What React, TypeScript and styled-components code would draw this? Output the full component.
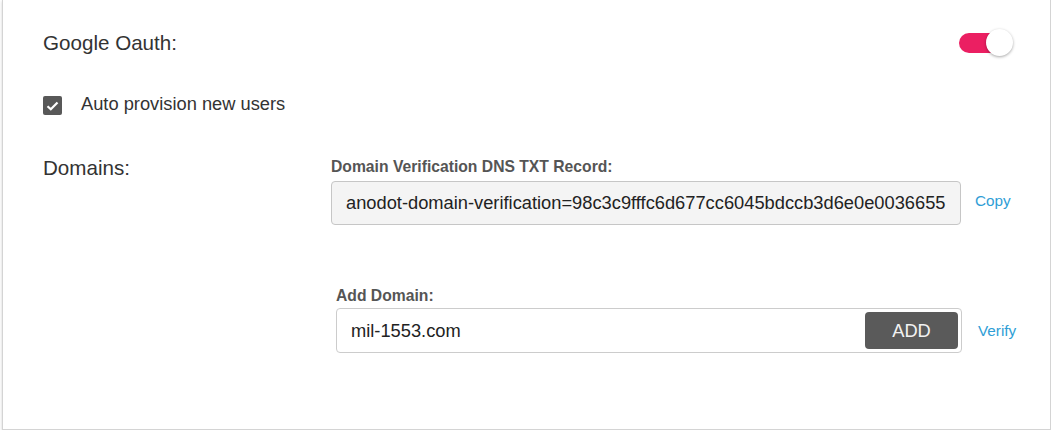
import React, { useState } from 'react';
import styled, { createGlobalStyle } from 'styled-components';

const GlobalStyle = createGlobalStyle`
  html, body {
    margin: 0;
    padding: 0;
    background: #ffffff;
  }
  body {
    font-family: 'Liberation Sans', Arial, sans-serif;
    color: #333333;
  }
`;

const Page = styled.div`
  padding-left: 2px;
`;

const Card = styled.div`
  box-sizing: border-box;
  width: 1049px;
  height: 430px;
  background: #ffffff;
  border: 1px solid #d4d4d4;
  border-top: none;
  box-shadow: 0 1px 3px rgba(0, 0, 0, 0.18);
  padding: 22px 37px 0 40px;
  display: flex;
  flex-direction: column;
`;

const HeaderRow = styled.div`
  display: flex;
  align-items: center;
  justify-content: space-between;
  height: 40px;
`;

const Title = styled.div`
  font-size: 20.6px;
  line-height: 23px;
  color: #333333;
`;

const Switch = styled.button<{ $on: boolean }>`
  position: relative;
  width: 54px;
  height: 28px;
  padding: 0;
  border: none;
  background: transparent;
  cursor: pointer;
  margin-top: -1px;
`;

const Track = styled.span<{ $on: boolean }>`
  position: absolute;
  left: 0;
  top: 5px;
  width: 46px;
  height: 20px;
  border-radius: 10px;
  background: ${p => (p.$on ? '#eb1f62' : '#bdbdbd')};
`;

const Thumb = styled.span<{ $on: boolean }>`
  position: absolute;
  top: 1px;
  left: ${p => (p.$on ? '27px' : '0px')};
  width: 27px;
  height: 27px;
  border-radius: 50%;
  background: #ffffff;
  box-shadow: 0 1px 3px rgba(0, 0, 0, 0.35);
`;

const CheckRow = styled.label`
  display: flex;
  align-items: center;
  gap: 19px;
  height: 19px;
  margin-top: 34px;
  cursor: pointer;
`;

const CheckBox = styled.span<{ $checked: boolean }>`
  width: 19px;
  height: 19px;
  border-radius: 2px;
  background: ${p => (p.$checked ? '#585858' : '#ffffff')};
  border: ${p => (p.$checked ? 'none' : '2px solid #585858')};
  box-sizing: border-box;
  display: flex;
  align-items: center;
  justify-content: center;
`;

const CheckLabel = styled.span`
  font-size: 18.3px;
  line-height: 20px;
  color: #333333;
  margin-top: -4px;
`;

const DomainsRow = styled.div`
  display: grid;
  grid-template-columns: 288px 1fr;
  margin-top: 41px;
`;

const SectionLabel = styled.div`
  font-size: 20.6px;
  line-height: 23px;
  color: #333333;
`;

const Fields = styled.div`
  display: flex;
  flex-direction: column;
`;

const FieldGroup = styled.div<{ $indent?: number; $top?: number }>`
  display: flex;
  flex-direction: column;
  margin-left: ${p => p.$indent ?? 0}px;
  margin-top: ${p => p.$top ?? 0}px;
`;

const FieldLabel = styled.div<{ $gap: number }>`
  font-size: 15.7px;
  line-height: 18px;
  font-weight: 700;
  color: #555555;
  margin-top: 2px;
  margin-bottom: ${p => p.$gap}px;
`;

const FieldLine = styled.div<{ $gap: number }>`
  display: flex;
  align-items: center;
  gap: ${p => p.$gap}px;
`;

const Box = styled.div<{ $readOnly?: boolean; $width: number; $height: number }>`
  box-sizing: border-box;
  width: ${p => p.$width}px;
  height: ${p => p.$height}px;
  border: 1px solid ${p => (p.$readOnly ? '#c6c6c6' : '#cccccc')};
  border-radius: 4px;
  background: ${p => (p.$readOnly ? '#f4f4f4' : '#ffffff')};
  display: flex;
  align-items: center;
  justify-content: space-between;
  padding: 0 3px 0 14px;
`;

const BoxText = styled.span`
  font-size: 18.3px;
  color: #222222;
  white-space: nowrap;
`;

const AddButton = styled.button`
  width: 93px;
  height: 37px;
  border: none;
  border-radius: 4px;
  background: #5a5a5a;
  color: #f2f2f2;
  font-family: 'Liberation Sans', Arial, sans-serif;
  font-size: 18.3px;
  cursor: pointer;
`;

const LinkText = styled.a<{ $lift?: number }>`
  font-size: 15.3px;
  color: #2f9ed6;
  text-decoration: none;
  cursor: pointer;
  margin-top: ${p => -(p.$lift ?? 0)}px;
`;

export default function App() {
  const [oauth, setOauth] = useState(true);
  const [provision, setProvision] = useState(true);

  return (
    <Page>
      <GlobalStyle />
      <Card>
        <HeaderRow>
          <Title>Google Oauth:</Title>
          <Switch $on={oauth} onClick={() => setOauth(!oauth)} aria-label="Google Oauth">
            <Track $on={oauth} />
            <Thumb $on={oauth} />
          </Switch>
        </HeaderRow>

        <CheckRow onClick={() => setProvision(!provision)}>
          <CheckBox $checked={provision}>
            {provision && (
              <svg width="13" height="10" viewBox="0 0 13 10">
                <path d="M1.5 5.2 L4.8 8.3 L11.5 1.5" fill="none" stroke="#ffffff" strokeWidth="2.2" />
              </svg>
            )}
          </CheckBox>
          <CheckLabel>Auto provision new users</CheckLabel>
        </CheckRow>

        <DomainsRow>
          <SectionLabel>Domains:</SectionLabel>
          <Fields>
            <FieldGroup>
              <FieldLabel $gap={5}>Domain Verification DNS TXT Record:</FieldLabel>
              <FieldLine $gap={14}>
                <Box $readOnly $width={630} $height={44}>
                  <BoxText>anodot-domain-verification=98c3c9fffc6d677cc6045bdccb3d6e0e0036655</BoxText>
                </Box>
                <LinkText $lift={5}>Copy</LinkText>
              </FieldLine>
            </FieldGroup>

            <FieldGroup $indent={5} $top={60}>
              <FieldLabel $gap={3}>Add Domain:</FieldLabel>
              <FieldLine $gap={16}>
                <Box $width={626} $height={45}>
                  <BoxText>mil-1553.com</BoxText>
                  <AddButton>ADD</AddButton>
                </Box>
                <LinkText>Verify</LinkText>
              </FieldLine>
            </FieldGroup>
          </Fields>
        </DomainsRow>
      </Card>
    </Page>
  );
}
